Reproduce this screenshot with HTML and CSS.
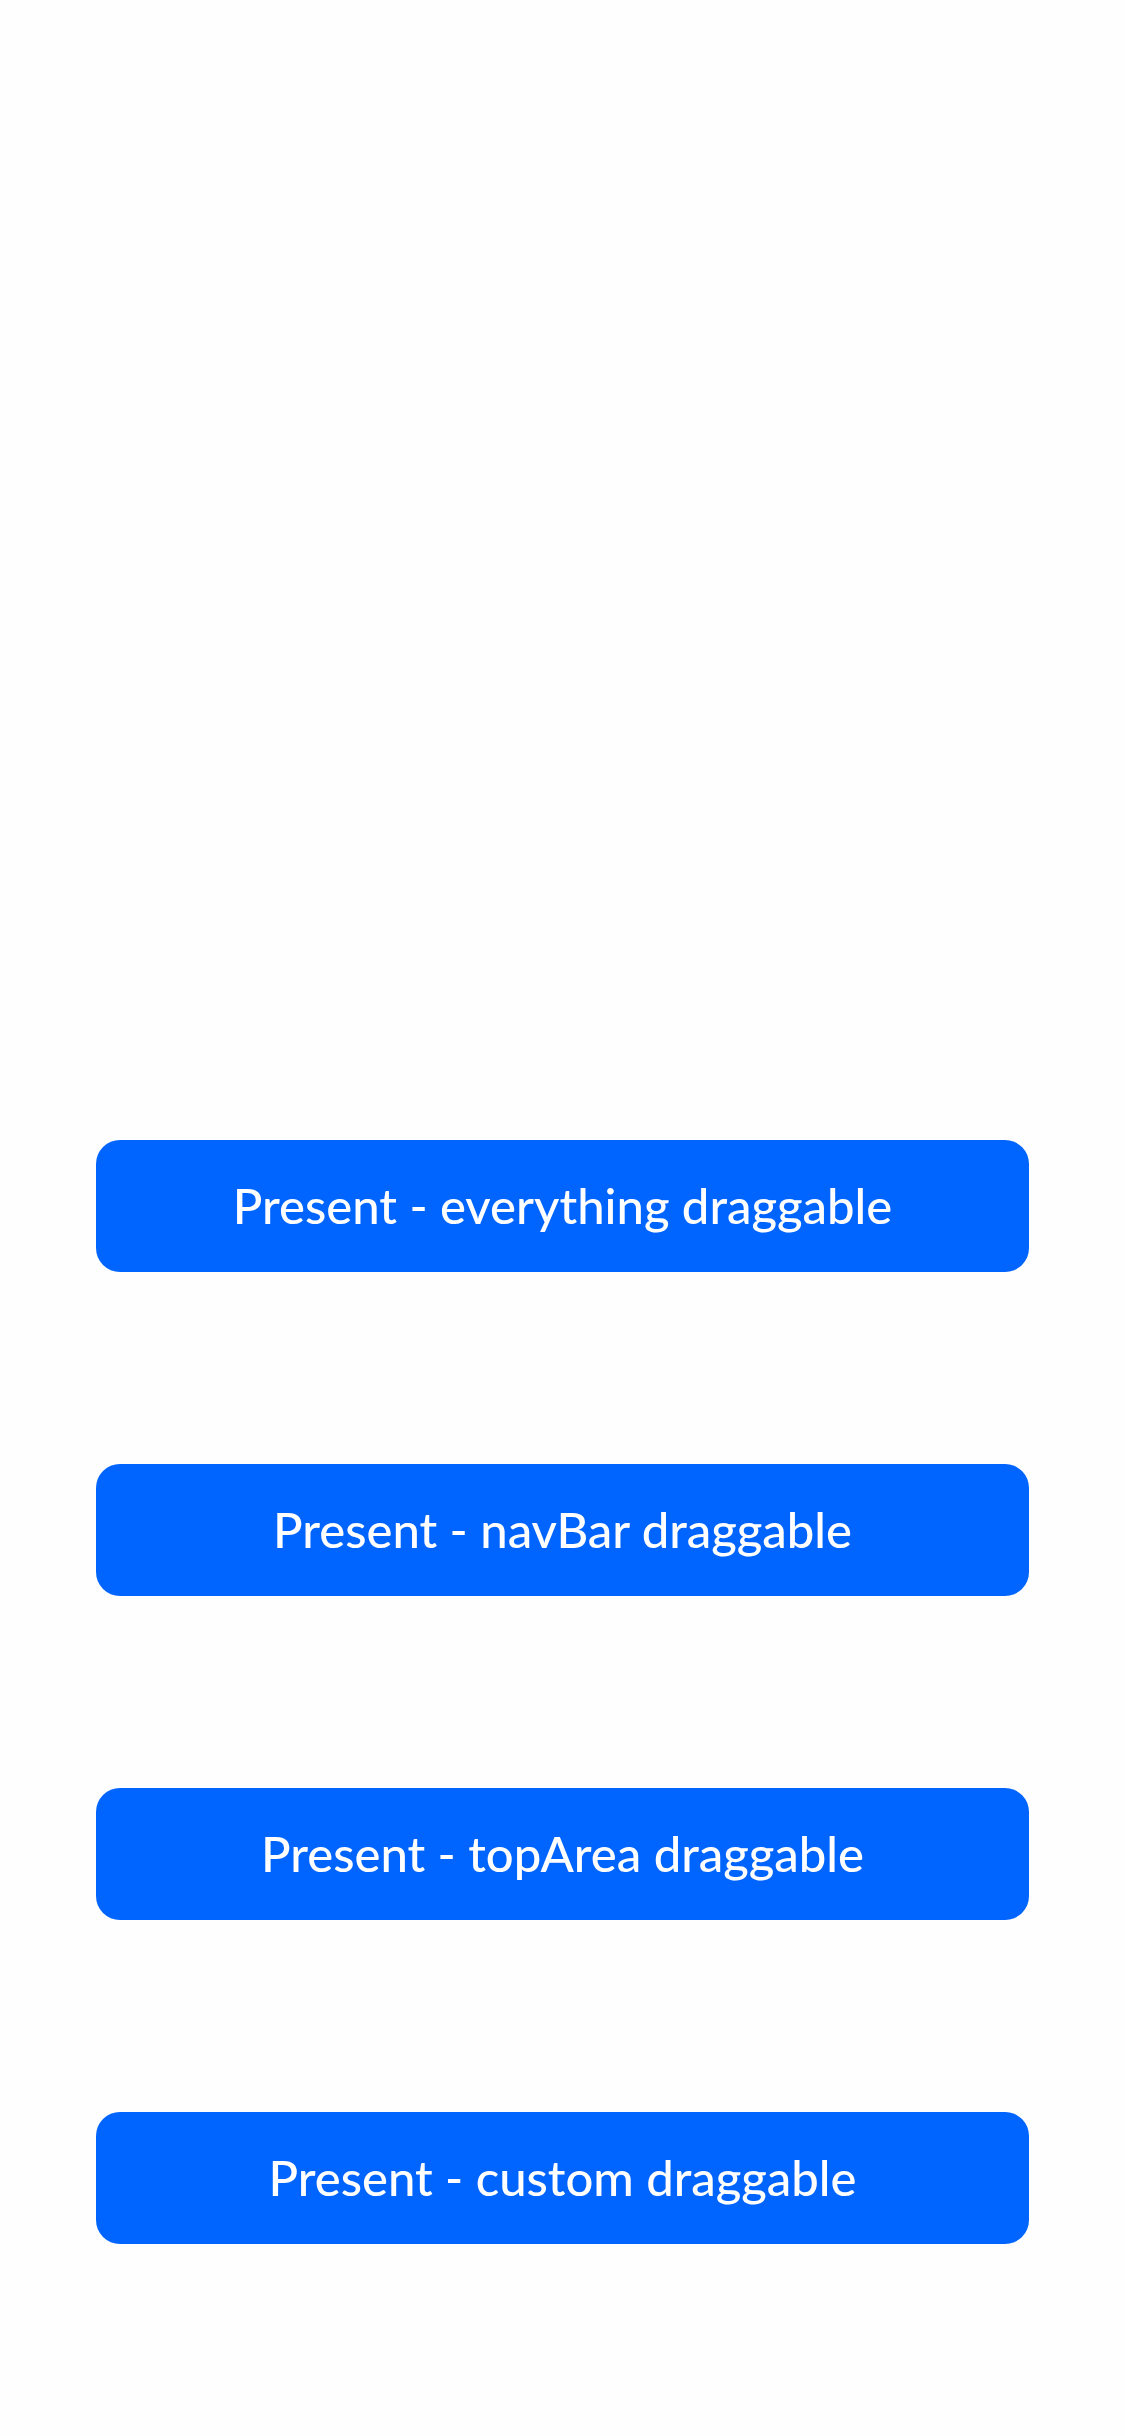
FILE: index.html
```html
<!DOCTYPE html>
<html>
<head>
<meta charset="utf-8">
<link rel="stylesheet" href="styles.css">
</head>
<body>
<main class="screen">
  <div class="list">
    <button class="btn">Present - everything draggable</button>
    <button class="btn">Present - navBar draggable</button>
    <button class="btn">Present - topArea draggable</button>
    <button class="btn">Present - custom draggable</button>
  </div>
</main>
</body>
</html>
```
FILE: styles.css
```css
html, body {
  margin: 0;
  padding: 0;
  background: #fefefe;
}
.screen {
  width: 1125px;
  height: 2436px;
  box-sizing: border-box;
  padding: 1140px 96px 0;
}
.list {
  display: flex;
  flex-direction: column;
  gap: 192px;
}
.btn {
  height: 132px;
  width: 100%;
  border: none;
  border-radius: 24px;
  background: #0064ff;
  color: #ffffff;
  font-family: "Lato", "Open Sans", sans-serif;
  font-size: 49px;
  font-weight: 500;
  padding: 0 0 3px;
  display: flex;
  align-items: center;
  justify-content: center;
}
```
